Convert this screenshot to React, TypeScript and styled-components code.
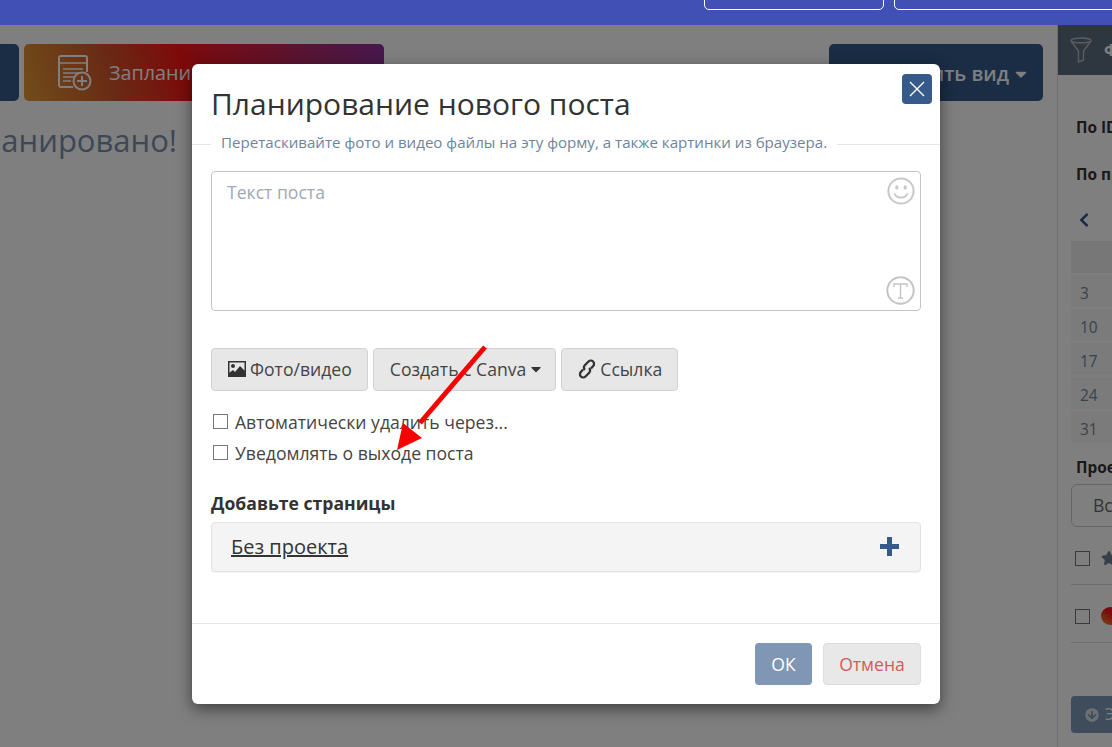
import React from 'react'
import styled, { createGlobalStyle } from 'styled-components'
import { FaChevronLeft, FaStar, FaArrowCircleDown, FaCaretDown } from 'react-icons/fa'

const GlobalStyle = createGlobalStyle`
    html, body {
        margin: 0;
        height: 100%;
        overflow: hidden;
    }
    body {
        font-family: 'Open Sans', 'Noto Sans', sans-serif;
        font-size: 16px;
        color: #333;
        background: #fff;
    }
    * {
        box-sizing: border-box;
    }
`

const calendarRows = ['3', '10', '17', '24', '31']

const App: React.FC = () => {
    return (
        <Page>
            <GlobalStyle />
            <TopBar>
                <TopButton $width={180} />
                <TopButton $width={300} />
            </TopBar>
            <Body>
                <Main>
                    <Toolbar>
                        <ToolbarGroup>
                            <BlueButton $width={119} />
                            <ScheduleButton>
                                <ScheduleIcon />
                                Запланировать пост
                            </ScheduleButton>
                        </ToolbarGroup>
                        <ViewButton>
                            Сохранить вид <FaCaretDown size={18} />
                        </ViewButton>
                    </Toolbar>
                    <EmptyTitle>
                        <span>Ничего не запланировано!</span>
                    </EmptyTitle>
                </Main>
                <Sidebar>
                    <SidebarHead>
                        <FilterIcon />
                        <SidebarTitle>Фильтр</SidebarTitle>
                    </SidebarHead>
                    <SidebarBody>
                        <FilterLabel $top={43}>По ID</FilterLabel>
                        <FilterLabel $top={27}>По проекту</FilterLabel>
                        <CalendarNav>
                            <FaChevronLeft size={16} />
                        </CalendarNav>
                        <Calendar>
                            <CalendarHead />
                            {calendarRows.map(day => (
                                <CalendarCell key={day}>{day}</CalendarCell>
                            ))}
                        </Calendar>
                        <ProjectLabel>Проекты</ProjectLabel>
                        <ProjectSelect>Все проекты</ProjectSelect>
                        <ProjectRow>
                            <Check $dark />
                            <FaStar size={16} color="#6e7f94" />
                        </ProjectRow>
                        <ProjectRow>
                            <Check $dark />
                            <ProjectDot />
                        </ProjectRow>
                        <ExportButton>
                            <FaArrowCircleDown size={14} color="#dbe0e6" /> Экспорт
                        </ExportButton>
                    </SidebarBody>
                </Sidebar>
            </Body>
            <Backdrop />
            <Modal>
                <CloseButton>
                    <svg width="16" height="16" viewBox="0 0 16 16" fill="none" stroke="#fff" strokeWidth="1.4">
                        <path d="M1 1l14 14M15 1L1 15" />
                    </svg>
                </CloseButton>
                <ModalTitle>Планирование нового поста</ModalTitle>
                <DividerRow>
                    <DividerText>Перетаскивайте фото и видео файлы на эту форму, а также картинки из браузера.</DividerText>
                </DividerRow>
                <ModalBody>
                    <PostBox>
                        <Placeholder>Текст поста</Placeholder>
                        <BoxIcons>
                            <SmileIcon />
                            <FontIcon />
                        </BoxIcons>
                    </PostBox>
                    <Actions>
                        <ActionButton>
                            <PictureIcon />
                            Фото/видео
                        </ActionButton>
                        <ActionButton>
                            Создать с Canva
                            <ButtonCaret size={16} color="#333" />
                        </ActionButton>
                        <ActionButton>
                            <ChainIcon />
                            Ссылка
                        </ActionButton>
                    </Actions>
                    <CheckList>
                        <CheckRow>
                            <Check />
                            Автоматически удалить через...
                        </CheckRow>
                        <CheckRow>
                            <Check />
                            Уведомлять о выходе поста
                        </CheckRow>
                    </CheckList>
                    <PagesTitle>Добавьте страницы</PagesTitle>
                    <ProjectPanel>
                        <ProjectName>Без проекта</ProjectName>
                        <PlusIcon />
                    </ProjectPanel>
                </ModalBody>
                <ModalFooter>
                    <OkButton>ОК</OkButton>
                    <CancelButton>Отмена</CancelButton>
                </ModalFooter>
            </Modal>
            <Arrow viewBox="0 0 100 115" width="100" height="115">
                <path d="M95 2L30 78" stroke="#f80000" strokeWidth="5" fill="none" />
                <path d="M7 105L13 78L32 93Z" fill="#f80000" />
            </Arrow>
        </Page>
    )
}

const ScheduleIcon: React.FC = () => (
    <svg width="36" height="36" viewBox="0 0 36 36" fill="none" stroke="#fff" strokeWidth="2">
        <path d="M16 32H4a2 2 0 0 1-2-2V3a2 2 0 0 1 2-2h24a2 2 0 0 1 2 2v14" />
        <path d="M2 8h28M6 14h20M6 18h16M6 22h11M6 26h8" strokeWidth="1.6" />
        <circle cx="25" cy="26" r="8.5" />
        <path d="M25 21v10M20 26h10" />
    </svg>
)

const FilterIcon: React.FC = () => (
    <svg width="22" height="26" viewBox="0 0 22 26" fill="none" stroke="#b4b9bd" strokeWidth="1.4">
        <ellipse cx="11" cy="3.4" rx="10" ry="2.4" />
        <path d="M1 4l7.5 10v11l5-2V14L21 4" />
    </svg>
)

const SmileIcon: React.FC = () => (
    <svg width="28" height="28" viewBox="0 0 28 28" fill="none" stroke="#c8c8c8" strokeWidth="2">
        <circle cx="14" cy="14" r="12.6" />
        <ellipse cx="9.8" cy="10.4" rx="1.6" ry="2.2" fill="#c8c8c8" stroke="none" />
        <ellipse cx="18.2" cy="10.4" rx="1.6" ry="2.2" fill="#c8c8c8" stroke="none" />
        <path d="M7.5 16.5c2 5.4 11 5.4 13 0" />
    </svg>
)

const FontIcon: React.FC = () => (
    <svg width="29" height="29" viewBox="0 0 29 29" fill="none" stroke="#c4c4c4">
        <circle cx="14.5" cy="14.5" r="13.2" strokeWidth="2" />
        <path d="M8 11V8h13v3M14.5 8v14M12 22h5" strokeWidth="1.4" />
    </svg>
)

const PictureIcon: React.FC = () => (
    <svg width="18" height="16" viewBox="0 0 18 16" fill="none" stroke="#333" strokeWidth="1.5">
        <rect x="0.75" y="0.75" width="16.5" height="14.5" />
        <circle cx="5" cy="5" r="2" fill="#333" stroke="none" />
        <path d="M1 15v-3l4-3 2 2 5-6 5 5v5z" fill="#333" stroke="none" />
    </svg>
)

const ChainIcon: React.FC = () => (
    <svg width="18" height="20" viewBox="0 0 18 20" fill="none" stroke="#333" strokeWidth="2.3">
        <path d="M7 10.8a3 3 0 0 1-.2-4.5l3.7-3.8a3.2 3.2 0 0 1 4.6 4.6L13 9.5" />
        <path d="M11 9.2a3 3 0 0 1 .2 4.5l-3.7 3.8a3.2 3.2 0 0 1-4.6-4.6L5 10.5" />
    </svg>
)

const PlusIcon: React.FC = () => (
    <svg width="19" height="19" viewBox="0 0 19 19" fill="#365b8a">
        <path d="M7 0h5v7h7v5h-7v7H7v-7H0V7h7z" />
    </svg>
)

export default App

const Page = styled.div`
    position: relative;
    width: 1112px;
    height: 747px;
    overflow: hidden;
    display: flex;
    flex-direction: column;
`

const TopBar = styled.header`
    position: relative;
    z-index: 3;
    height: 25px;
    flex-shrink: 0;
    background: #4050b5;
    display: flex;
    justify-content: flex-start;
    align-items: flex-end;
    gap: 10px;
    padding: 0 0 15px 704px;
`

const TopButton = styled.div<{ $width: number }>`
    width: ${props => props.$width}px;
    height: 30px;
    flex-shrink: 0;
    border: 1px solid #fff;
    border-radius: 5px;
`

const Body = styled.div`
    flex: 1;
    display: flex;
    min-height: 0;
`

const Main = styled.main`
    width: 1057px;
    flex-shrink: 0;
    padding: 19px 14px 0 0;
`

const Toolbar = styled.div`
    display: flex;
    justify-content: space-between;
    height: 57px;
`

const ToolbarGroup = styled.div`
    display: flex;
    gap: 5px;
    margin-left: -100px;
`

const BlueButton = styled.div<{ $width: number }>`
    width: ${props => props.$width}px;
    background: #345a8a;
    border-radius: 5px;
`

const ScheduleButton = styled.div`
    width: 360px;
    display: flex;
    align-items: center;
    gap: 16px;
    padding-left: 33px;
    border-radius: 5px;
    background: linear-gradient(72deg, #e29a34 0%, #d2552a 25%, #fc1414 45%, #b02a66 78%, #8e2f9c 100%);
    color: #fff;
    font-size: 19.8px;
    font-weight: 400;
    white-space: nowrap;
    overflow: hidden;
`

const ViewButton = styled.div`
    width: 214px;
    display: flex;
    align-items: center;
    justify-content: flex-end;
    gap: 3px;
    padding: 2px 13px 0 0;
    border-radius: 5px;
    background: #345a8a;
    color: #fff;
    font-size: 19.8px;
    font-weight: 600;
    white-space: nowrap;
    overflow: hidden;
`

const EmptyTitle = styled.h2`
    width: 177px;
    margin: 19px 0 0;
    display: flex;
    justify-content: flex-end;
    font-size: 31px;
    line-height: 40px;
    font-weight: 400;
    color: #788eae;
    white-space: nowrap;
`

const Sidebar = styled.aside`
    width: 320px;
    flex-shrink: 0;
    border-left: 1px solid #dcdcdc;
`

const SidebarHead = styled.div`
    height: 50px;
    display: flex;
    align-items: center;
    gap: 12px;
    padding-left: 12px;
    background: #5c6f80;
    color: #fff;
`

const SidebarTitle = styled.span`
    font-size: 16px;
    font-weight: 700;
`

const SidebarBody = styled.div`
    padding: 0 13px;
`

const FilterLabel = styled.div<{ $top: number }>`
    margin: ${props => props.$top}px 0 0 5px;
    height: 20px;
    font-size: 15.4px;
    line-height: 20px;
    font-weight: 700;
    color: #333;
`

const CalendarNav = styled.div`
    height: 20px;
    margin-top: 25px;
    padding-left: 5px;
    color: #2f5488;
    display: flex;
    align-items: center;
`

const Calendar = styled.div`
    margin-top: 11px;
    display: flex;
    flex-direction: column;
    gap: 2px;
`

const CalendarHead = styled.div`
    height: 32px;
    background: #eee;
`

const CalendarCell = styled.div`
    height: 32px;
    padding: 4px 0 0 9px;
    display: flex;
    align-items: center;
    background: #f6f6f6;
    color: #70859c;
    font-size: 15.4px;
`

const ProjectLabel = styled.div`
    margin: 13px 0 0 5px;
    height: 24px;
    font-size: 15.4px;
    line-height: 24px;
    font-weight: 700;
    color: #333;
`

const ProjectSelect = styled.div`
    height: 43px;
    margin-top: 4px;
    padding-left: 21px;
    border: 1px solid #ccc;
    border-radius: 6px;
    color: #666;
    font-size: 17.6px;
    line-height: 41px;
`

const ProjectRow = styled.div`
    height: 58px;
    padding: 5px 0 0 4px;
    display: flex;
    align-items: center;
    gap: 11px;
    border-bottom: 1px solid #ddd;
`

const Check = styled.span<{ $dark?: boolean }>`
    display: inline-block;
    flex-shrink: 0;
    width: 15px;
    height: 15px;
    border: 1px solid ${props => (props.$dark ? '#777' : '#767676')};
    border-width: ${props => (props.$dark ? '1.5px' : '1px')};
    background: #fff;
`

const ProjectDot = styled.span`
    width: 18px;
    height: 18px;
    border-radius: 50%;
    background: linear-gradient(30deg, #f09433, #f01818 60%);
`

const ExportButton = styled.div`
    height: 37px;
    margin-top: 53px;
    display: flex;
    align-items: center;
    gap: 6px;
    padding-left: 14px;
    border-radius: 4px;
    background: #7f99b9;
    color: #fff;
    font-size: 15.4px;
`

const Backdrop = styled.div`
    position: absolute;
    z-index: 1;
    left: 0;
    right: 0;
    top: 25px;
    bottom: 0;
    background: rgba(0, 0, 0, 0.5);
`

const Modal = styled.section`
    position: absolute;
    z-index: 2;
    left: 192px;
    top: 64px;
    width: 748px;
    height: 640px;
    display: flex;
    flex-direction: column;
    background: #fff;
    border-radius: 6px;
    box-shadow: 0 5px 15px rgba(0, 0, 0, 0.5);
`

const CloseButton = styled.div`
    position: absolute;
    top: 10px;
    right: 8px;
    width: 30px;
    height: 30px;
    display: flex;
    align-items: center;
    justify-content: center;
    background: #365b8a;
    border-radius: 4px;
`

const ModalTitle = styled.h3`
    margin: 19px 0 0 19px;
    font-size: 30px;
    line-height: 41px;
    font-weight: 400;
    color: #333;
`

const DividerRow = styled.div`
    height: 1px;
    margin-top: 20px;
    background: #e5e5e5;
    display: flex;
    align-items: center;
    padding-left: 19px;
`

const DividerText = styled.span`
    padding: 0 10px 5px;
    background: #fff;
    color: #70839b;
    font-size: 15.1px;
    line-height: 20px;
    white-space: nowrap;
`

const ModalBody = styled.div`
    flex: 1;
    padding: 26px 19px 0;
`

const PostBox = styled.div`
    position: relative;
    height: 140px;
    padding: 8px 15px;
    border: 1px solid #c4c4c4;
    border-radius: 4px;
`

const Placeholder = styled.div`
    color: #a0a8b2;
    font-size: 17.6px;
    line-height: 24px;
`

const BoxIcons = styled.div`
    position: absolute;
    top: 5px;
    right: 5px;
    bottom: 5px;
    display: flex;
    flex-direction: column;
    justify-content: space-between;
    align-items: center;
`

const Actions = styled.div`
    display: flex;
    gap: 5px;
    margin-top: 37px;
`

const ActionButton = styled.div`
    height: 43px;
    display: flex;
    align-items: center;
    gap: 4px;
    padding: 0 15px 2px 16px;
    background: #e7e7e7;
    border: 1px solid #d2d2d2;
    border-radius: 4px;
    color: #444;
    font-size: 17.6px;
    white-space: nowrap;
`

const ButtonCaret = styled(FaCaretDown)`
    margin: 0 -4px 0 -2px;
`

const CheckList = styled.div`
    margin-top: 15px;
`

const CheckRow = styled.div`
    height: 31px;
    display: flex;
    align-items: center;
    gap: 7px;
    padding-left: 2px;
    color: #444;
    font-size: 17.6px;
`

const PagesTitle = styled.div`
    margin-top: 23px;
    height: 24px;
    font-size: 17.6px;
    line-height: 24px;
    font-weight: 700;
    color: #333;
`

const ProjectPanel = styled.div`
    height: 50px;
    margin-top: 7px;
    display: flex;
    align-items: center;
    justify-content: space-between;
    padding: 0 21px 2px 19px;
    background: #f4f4f4;
    border: 1px solid #e2e2e2;
    border-radius: 4px;
    box-shadow: 0 1px 1px rgba(0, 0, 0, 0.05);
`

const ProjectName = styled.span`
    color: #333;
    font-size: 20px;
    text-decoration: underline;
`

const ModalFooter = styled.footer`
    height: 81px;
    display: flex;
    justify-content: flex-end;
    gap: 11px;
    padding: 19px 19px 0;
    border-top: 1px solid #e5e5e5;
`

const OkButton = styled.div`
    width: 57px;
    height: 42px;
    display: flex;
    align-items: center;
    justify-content: center;
    background: #7f96b5;
    border-radius: 4px;
    color: #fff;
    font-size: 17.6px;
    font-weight: 500;
`

const CancelButton = styled.div`
    width: 98px;
    height: 42px;
    display: flex;
    align-items: center;
    justify-content: center;
    background: #e8e8e8;
    border: 1px solid #ddd;
    border-radius: 4px;
    color: #d15b5b;
    font-size: 17.6px;
`

const Arrow = styled.svg`
    position: absolute;
    z-index: 4;
    left: 390px;
    top: 345px;
`
